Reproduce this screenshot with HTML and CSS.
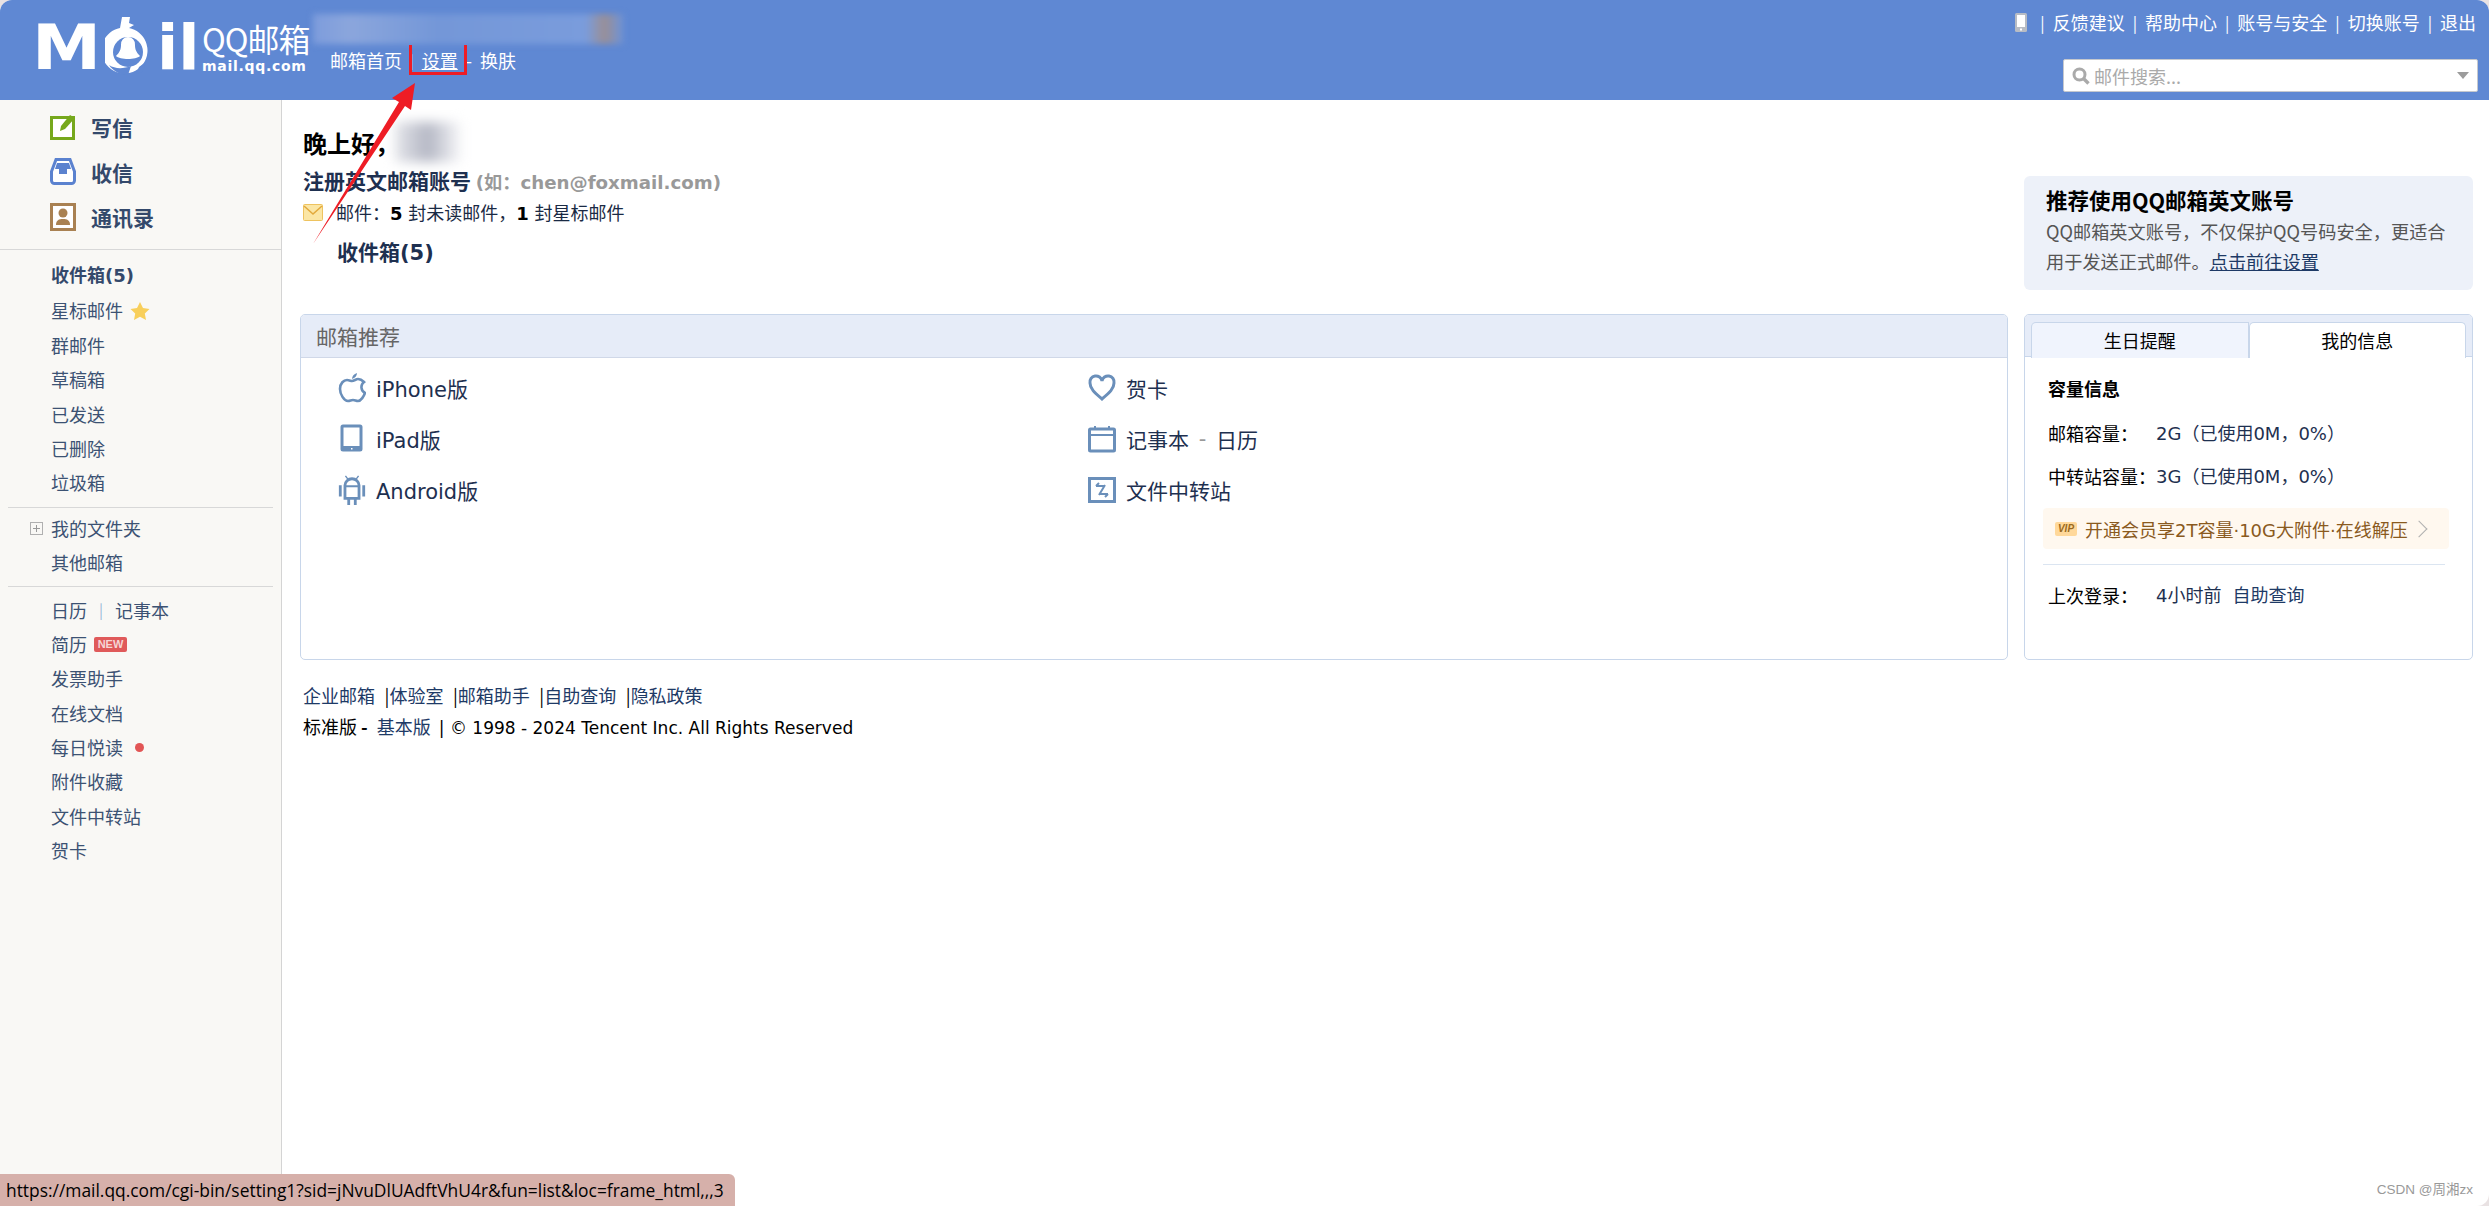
FILE: index.html
```html
<!DOCTYPE html>
<html lang="zh-CN">
<head>
	<meta charset="UTF-8">
	<title>QQ邮箱</title>
	<link rel="stylesheet" href="styles.css">
</head>
<body>
	<div class="app">
		<div class="top">
			<div class="logo">
				<span class="logo_m">M</span>
				<svg class="logo_a" viewBox="0 0 46 58">
					<path d="M17 0h8l-1 6 5 2-5 3a23 23 0 1 1-9 0z" fill="#fff"/>
					<circle cx="23" cy="35" r="15" fill="#5f88d3"/>
					<path d="M23 20a7 7 0 0 1 7 8c0 4 1 7 5 11-4 4-20 4-24 0 4-4 5-7 5-11a7 7 0 0 1 7-8z" fill="#fff"/>
					<path d="M4 48c6 4 14 4 22 1l-3 9c-8 0-15-4-19-10zM34 50l8-6-5 11-6 2z" fill="#5f88d3"/>
				</svg>
				<span class="logo_il">il</span>
				<div class="logo_txt">
					<div class="logo_cn">QQ邮箱</div>
					<div class="logo_en">mail.qq.com</div>
				</div>
			</div>
			<div class="top_mid">
				<div class="account"></div>
				<div class="nav"><a>邮箱首页</a><span class="nav_sep">|</span><a class="nav_on">设置</a><span class="nav_dash">-</span><a>换肤</a></div>
			</div>
			<div class="top_right">
				<div class="links">
					<svg class="phone" viewBox="0 0 12 19"><rect width="12" height="19" rx="1.5" fill="#b8bcc4"/><rect x="2" y="2" width="8" height="12" fill="#fff"/><rect x="5" y="15.5" width="2" height="2" fill="#fff"/></svg>
					<i>|</i><a>反馈建议</a><i>|</i><a>帮助中心</a><i>|</i><a>账号与安全</a><i>|</i><a>切换账号</a><i>|</i><a>退出</a>
				</div>
				<div class="search">
					<svg class="search_ic" viewBox="0 0 18 18"><circle cx="7.5" cy="7.5" r="5.5" fill="none" stroke="#aaa" stroke-width="3"/><path d="M11.5 11.5l5 5" stroke="#aaa" stroke-width="3.4"/></svg>
					<span class="search_txt">邮件搜索...</span>
					<span class="search_arrow"></span>
				</div>
			</div>
		</div>

		<div class="body">
			<div class="side">
				<div class="side_main">
					<div class="side_big">
						<svg class="side_ic" viewBox="0 0 26 26"><rect x="1.5" y="3.5" width="22" height="21" fill="#fff" stroke="#76a81c" stroke-width="3"/><path d="M10 17l1-5 9-11 5 3-10 11z" fill="#76a81c"/></svg>
						<span>写信</span>
					</div>
					<div class="side_big">
						<svg class="side_ic" viewBox="0 0 26 28"><path d="M6 1.5h14l4.500 12v9a3 3 0 0 1-3 3h-17a3 3 0 0 1-3-3v-9z" fill="#fff" stroke="#5b82cf" stroke-width="3"/><path d="M7 5h12l2 6h-4v5h-8v-5h-4z" fill="#5b82cf"/></svg>
						<span>收信</span>
					</div>
					<div class="side_big">
						<svg class="side_ic" viewBox="0 0 26 28"><rect x="1.500" y="1.500" width="23" height="25" fill="#fff" stroke="#a98152" stroke-width="3"/><circle cx="13" cy="10" r="4.500" fill="#a98152"/><path d="M6 22c0-5 3-6 7-6s7 1 7 6z" fill="#a98152"/></svg>
						<span>通讯录</span>
					</div>
				</div>
				<div class="side_line side_full"></div>
				<div class="side_list first">
					<a class="side_item side_bold">收件箱(5)</a>
					<a class="side_item">星标邮件 <svg class="star" viewBox="0 0 20 20"><path d="M10 1l3 6 6.500 1-4.700 4.500 1.200 6.500-6-3.200-6 3.200 1.200-6.500L.5 8 7 7z" fill="#f8cf5b"/></svg></a>
					<a class="side_item">群邮件</a>
					<a class="side_item">草稿箱</a>
					<a class="side_item">已发送</a>
					<a class="side_item">已删除</a>
					<a class="side_item">垃圾箱</a>
				</div>
				<div class="side_line"></div>
				<div class="side_list second">
					<a class="side_item"><span class="plus"></span>我的文件夹</a>
					<a class="side_item">其他邮箱</a>
				</div>
				<div class="side_line"></div>
				<div class="side_list third">
					<a class="side_item">日历<span class="side_sep">|</span>记事本</a>
					<a class="side_item">简历<span class="new">NEW</span></a>
					<a class="side_item">发票助手</a>
					<a class="side_item">在线文档</a>
					<a class="side_item">每日悦读<span class="dot"></span></a>
					<a class="side_item">附件收藏</a>
					<a class="side_item">文件中转站</a>
					<a class="side_item">贺卡</a>
				</div>
			</div>

			<div class="main">
				<div class="row_top">
					<div class="hello">
						<div class="hello_t">晚上好，<span class="hello_name"></span></div>
						<div class="reg">注册英文邮箱账号 <span class="reg_tip">(如：chen@foxmail.com)</span></div>
						<div class="mails">
							<svg class="env" viewBox="0 0 20 17"><rect x=".5" y=".5" width="19" height="16" rx="1" fill="#fbe6a5" stroke="#eec35f"/><path d="M1 2l9 8 9-8" fill="none" stroke="#e2a93c" stroke-width="1.500"/></svg>
							<span class="mails_txt">邮件：<b>5</b> 封未读邮件，<b>1</b> 封星标邮件</span>
						</div>
						<div class="inbox">收件箱(5)</div>
					</div>
					<div class="promo">
						<div class="promo_t">推荐使用QQ邮箱英文账号</div>
						<div class="promo_d">QQ邮箱英文账号，不仅保护QQ号码安全，更适合<br>用于发送正式邮件。<a>点击前往设置</a></div>
					</div>
				</div>

				<div class="row_panel">
					<div class="panel">
						<div class="panel_h">邮箱推荐</div>
						<div class="rec">
							<a class="rec_item"><svg class="rec_ic" viewBox="0 0 26 30"><path d="M13 8c2 0 4-2 6-2 3 0 5 2 6 3-4 3-3 9 1 11-1 3-4 8-7 8-2 0-3-1-5-1s-3 1-5 1c-4 0-8-7-8-12 0-6 4-9 7-9 2 0 4 1 5 1z" fill="none" stroke="#6a8fba" stroke-width="2.600"/><path d="M13 6c0-3 2-5 5-6 0 3-2 5-5 6z" fill="#6a8fba"/></svg>iPhone版</a>
							<a class="rec_item"><svg class="rec_ic" viewBox="0 0 26 30"><rect x="3" y="2" width="19" height="24" rx="1" fill="none" stroke="#6a8fba" stroke-width="3"/><rect x="2" y="22" width="21" height="5" fill="#6a8fba"/><rect x="12" y="24" width="1.500" height="1.500" fill="#fff"/></svg>iPad版</a>
							<a class="rec_item"><svg class="rec_ic" viewBox="1 0 28 32"><path d="M8 1l3 4M22 1l-3 4" stroke="#6a8fba" stroke-width="1.500"/><path d="M7.500 25V11a7.500 7 0 0 1 15 0v14z" fill="none" stroke="#6a8fba" stroke-width="3"/><path d="M7 12h16" stroke="#6a8fba" stroke-width="2"/><path d="M1 11h3v12H1zM26 11h3v12h-3zM10 25h3v7h-3zM17 25h3v7h-3z" fill="#6a8fba"/></svg>Android版</a>
							<a class="rec_item"><svg class="rec_ic" viewBox="0 0 28 26"><path d="M14 24C7 18 2 14 2 8a6 6 0 0 1 12-2 6 6 0 0 1 12 2c0 6-5 10-12 16z" fill="none" stroke="#6a8fba" stroke-width="3"/></svg>贺卡</a>
							<a class="rec_item"><svg class="rec_ic" viewBox="0 0 28 28"><rect x="1.500" y="4" width="25" height="22" rx="1" fill="none" stroke="#6a8fba" stroke-width="3"/><path d="M1 10h26" stroke="#6a8fba" stroke-width="2"/><path d="M6 1h2v4H6zM20 1h2v4h-2z" fill="#6a8fba"/></svg>记事本 <span class="rec_dash">-</span> 日历</a>
							<a class="rec_item"><svg class="rec_ic" viewBox="0 0 28 26"><rect x="1.500" y="1.500" width="25" height="23" fill="none" stroke="#6a8fba" stroke-width="3"/><path d="M8 9h8M8 9l3-3M20 17h-8M20 17l-3 3M17 8l-6 10" fill="none" stroke="#6a8fba" stroke-width="2"/></svg>文件中转站</a>
						</div>
					</div>

					<div class="info">
						<div class="tabs">
							<div class="tab">生日提醒</div>
							<div class="tab tab_on">我的信息</div>
						</div>
						<div class="info_body">
							<div class="info_t">容量信息</div>
							<div class="info_row"><span class="info_k">邮箱容量：</span>2G（已使用0M，0%）</div>
							<div class="info_row"><span class="info_k">中转站容量：</span>3G（已使用0M，0%）</div>
							<div class="vip">
								<span class="vip_ic">VIP</span>
								<span class="vip_txt">开通会员享2T容量·10G大附件·在线解压</span>
								<span class="vip_arrow"></span>
							</div>
							<div class="info_line"></div>
							<div class="info_row"><span class="info_k">上次登录：</span>4小时前<a class="info_q">自助查询</a></div>
						</div>
					</div>
				</div>

				<div class="foot">
					<div class="foot_l"><a>企业邮箱</a> |<a>体验室</a> |<a>邮箱助手</a> |<a>自助查询</a> |<a>隐私政策</a></div>
					<div class="foot_l foot_b">标准版 <b>-</b> <a>基本版</a> <span class="foot_c">| © 1998 - 2024 Tencent Inc. All Rights Reserved</span></div>
				</div>
			</div>
		</div>
	</div>

	<!-- 截图上的标注 -->
	<div class="mark_box"></div>
	<svg class="mark_arrow" viewBox="0 0 110 170"><path d="M3 164L89 22 82 18 105 3 101 30 95 26z" fill="#ee1c25"/></svg>

	<div class="status">https://mail.qq.com/cgi-bin/setting1?sid=jNvuDlUAdftVhU4r&amp;fun=list&amp;loc=frame_html,,,3</div>
	<div class="wm">CSDN @周湘zx</div>
</body>
</html>
```
FILE: styles.css
```css
html, body {
	height: 100%;
}
body {
	margin: 0px;
	background-color: #e9e2e3;
	color: #000000;
	font-family: "Noto Sans CJK SC", sans-serif;
	font-size: 18px;
	overflow: hidden;
}
a {
	color: #1e3a66;
}
.app {
	height: 1206px;
	display: flex;
	flex-direction: column;
	background-color: #ffffff;
	border-radius: 12px;
	overflow: hidden;
}

/* top bar */
.top {
	height: 100px;
	flex: none;
	display: flex;
	background-color: #5f88d3;
	color: #ffffff;
}
.top a {
	color: #ffffff;
}
.logo {
	width: 281px;
	padding-left: 32px;
	display: flex;
	align-items: flex-start;
	flex: none;
}
.logo_m, .logo_il {
	font-family: "DejaVu Sans", sans-serif;
	font-weight: bold;
	font-size: 62px;
	line-height: 62px;
	margin-top: 17px;
}
.logo_m {
	width: 73px;
	transform: scaleX(1.12);
	transform-origin: left;
}
.logo_a {
	width: 46px;
	height: 58px;
	margin-top: 17px;
}
.logo_il {
	width: 42px;
	margin-left: 6px;
}
.logo_txt {
	width: 108px;
	margin: 20px 0px 0px 3px;
	flex: none;
}
.logo_cn {
	font-size: 32px;
	line-height: 37px;
	letter-spacing: -1px;
	white-space: nowrap;
}
.logo_en {
	font-family: "DejaVu Sans", sans-serif;
	font-weight: bold;
	font-size: 14px;
	line-height: 18px;
	letter-spacing: 0.7px;
	white-space: nowrap;
}
.top_mid {
	flex: 1;
}
.account {
	width: 310px;
	height: 30px;
	margin-top: 14px;
	background: linear-gradient(90deg, #7d9cdc 0%, #8ba6dc 12%, #7497d8 40%, #7a9cdc 88%, #9a8f96 94%, #6f93d6 100%);
	filter: blur(3px);
}
.nav {
	margin: 1px 0px 0px 17px;
	height: 30px;
	line-height: 30px;
	display: flex;
}
.nav_on {
	text-decoration: underline;
}
.nav_sep {
	margin: 0px 8px;
	opacity: 0.6;
	font-size: 14px;
}
.nav_dash {
	margin: 0px 8px;
}
.top_right {
	width: 500px;
	flex: none;
	display: flex;
	flex-direction: column;
	align-items: flex-end;
}
.links {
	height: 44px;
	padding-right: 13px;
	display: flex;
	align-items: center;
	line-height: 44px;
}
.links i {
	font-style: normal;
	margin: 0px 8px;
	font-size: 16px;
}
.phone {
	width: 12px;
	height: 19px;
	margin-right: 5px;
}
.search {
	width: 405px;
	height: 31px;
	margin: 15px 11px 0px 0px;
	background-color: #ffffff;
	border: 1px solid #c5c8ce;
	border-radius: 2px;
	display: flex;
	align-items: center;
	padding-left: 8px;
}
.search_ic {
	width: 18px;
	height: 18px;
	margin-right: 4px;
}
.search_txt {
	flex: 1;
	color: #aaaaaa;
}
.search_arrow {
	width: 0px;
	height: 0px;
	margin-right: 8px;
	border-top: 7px solid #9c9c9c;
	border-left: 6px solid transparent;
	border-right: 6px solid transparent;
}

/* left menu */
.body {
	flex: 1;
	display: flex;
}
.side {
	width: 281px;
	flex: none;
	background-color: #f9f8f5;
	border-right: 1px solid #d4d4d4;
	color: #3c5273;
}
.side_main {
	padding-top: 4px;
	height: 149px;
	box-sizing: border-box;
}
.side_big {
	height: 45px;
	padding-left: 50px;
	display: flex;
	align-items: center;
	font-size: 21px;
	font-weight: bold;
	color: #34496b;
}
.side_ic {
	width: 26px;
	height: 28px;
	margin-right: 15px;
}
.side_line {
	height: 1px;
	background-color: #d8d8d8;
	margin: 0px 8px;
}
.side_line.side_full {
	margin: 0px;
}
.side_list.first {
	padding: 9px 0px 7px 0px;
}
.side_list.second {
	padding: 3px 0px 6px 0px;
}
.side_list.third {
	padding: 6px 0px 0px 0px;
}
.side_item {
	height: 34.4px;
	line-height: 34.4px;
	padding-left: 51px;
	display: flex;
	align-items: center;
	position: relative;
	color: #3c5273;
}
.side_bold {
	font-family: "DejaVu Sans", "Noto Sans CJK SC", sans-serif;
	font-weight: bold;
	color: #34496b;
}
.star {
	width: 20px;
	height: 20px;
	margin-left: 7px;
}
.plus {
	position: absolute;
	left: 30px;
	top: 11px;
	width: 11px;
	height: 11px;
	border: 1px solid #b0b0b0;
	background: linear-gradient(#999, #999) center/7px 1px no-repeat, linear-gradient(#999, #999) center/1px 7px no-repeat;
}
.side_sep {
	margin: 0px 12px;
	color: #9cb8d8;
	font-size: 15px;
}
.new {
	margin-left: 7px;
	width: 33px;
	height: 15px;
	line-height: 15px;
	border-radius: 2px;
	background-color: #e05a5a;
	color: #f6d6d6;
	font-family: "Liberation Sans", sans-serif;
	font-size: 11px;
	font-weight: bold;
	text-align: center;
}
.dot {
	width: 9px;
	height: 9px;
	margin-left: 12px;
	border-radius: 50%;
	background-color: #e25555;
}

/* main */
.main {
	flex: 1;
	padding: 0px 16px 0px 18px;
	min-width: 0;
}
.row_top, .row_panel {
	display: grid;
	grid-template-columns: 1fr 449px;
	column-gap: 16px;
}
.row_top {
	height: 214px;
}
.hello {
	padding: 25px 0px 0px 3px;
}
.hello_t {
	height: 36px;
	line-height: 36px;
	font-size: 24px;
	font-weight: bold;
	display: flex;
}
.hello_name {
	width: 66px;
	height: 40px;
	margin: -3px 0px 0px -4px;
	background: linear-gradient(90deg, #e4e5ea, #b4b7c4 50%, #f8f8fa);
	filter: blur(6px);
}
.reg {
	height: 32px;
	line-height: 32px;
	margin-top: 3px;
	font-size: 21px;
	font-weight: bold;
	color: #1e3050;
}
.reg_tip {
	font-family: "DejaVu Sans", "Noto Sans CJK SC", sans-serif;
	font-size: 18.2px;
	color: #999999;
}
.mails {
	height: 32px;
	display: flex;
	align-items: center;
	color: #1a2a44;
}
.env {
	width: 20px;
	height: 17px;
	margin-right: 13px;
}
.mails_txt {
	font-family: "DejaVu Sans", "Noto Sans CJK SC", sans-serif;
}
.mails b {
	color: #000000;
}
.inbox {
	height: 32px;
	line-height: 32px;
	margin-top: 9px;
	padding-left: 34px;
	font-family: "DejaVu Sans", "Noto Sans CJK SC", sans-serif;
	font-size: 21px;
	font-weight: bold;
	color: #1e3050;
}
.promo {
	margin-top: 76px;
	height: 114px;
	padding: 8px 0px 0px 22px;
	box-sizing: border-box;
	background-color: #edf1f9;
	border-radius: 6px;
}
.promo_t {
	height: 32px;
	line-height: 32px;
	font-size: 21.5px;
	font-weight: bold;
}
.promo_d {
	line-height: 30px;
	font-size: 18.2px;
	color: #555555;
	white-space: nowrap;
}
.promo_d a {
	text-decoration: underline;
	color: #1e3a66;
}

/* panels */
.row_panel {
	height: 346px;
}
.panel, .info {
	border: 1px solid #c8d6ea;
	border-radius: 5px;
	overflow: hidden;
}
.panel_h {
	height: 42px;
	line-height: 42px;
	padding-left: 15px;
	background-color: #e6ecf8;
	border-bottom: 1px solid #d0d8e8;
	font-size: 21px;
	color: #666666;
}
.rec {
	display: grid;
	grid-template-columns: 750px 1fr;
	grid-template-rows: repeat(3, 51px);
	grid-auto-flow: column;
	padding: 4px 0px 0px 0px;
}
.rec_item {
	display: flex;
	align-items: center;
	padding-left: 37px;
	font-size: 21px;
	font-family: "DejaVu Sans", "Noto Sans CJK SC", sans-serif;
	color: #1e3050;
	white-space: pre;
}
.rec_ic {
	width: 28px;
	height: 30px;
	margin-right: 10px;
}
.rec_dash {
	color: #999999;
	margin: 0px 3px;
}
.tabs {
	height: 42px;
	display: flex;
	padding: 7px 6px 0px 6px;
	box-sizing: border-box;
	background-color: #e6ecf8;
	border-bottom: 1px solid #c8d6ea;
}
.tab {
	flex: 1;
	height: 35px;
	line-height: 34px;
	text-align: center;
	font-size: 18px;
	background-color: #f0f4fd;
	border: 1px solid #c8d6ea;
	border-bottom: none;
	border-radius: 5px 0px 0px 0px;
}
.tab_on {
	background-color: #ffffff;
	border-radius: 5px 5px 0px 0px;
}
.info_body {
	padding: 15px 23px 0px 23px;
}
.info_t {
	height: 32px;
	line-height: 32px;
	font-weight: bold;
	margin-bottom: 8px;
}
.info_row {
	height: 43px;
	line-height: 43px;
	display: flex;
	color: #1e3050;
	white-space: nowrap;
	font-family: "DejaVu Sans", "Noto Sans CJK SC", sans-serif;
}
.info_k {
	width: 108px;
	color: #000000;
	flex: none;
	font-family: "Noto Sans CJK SC", sans-serif;
}
.info_q {
	margin-left: 11px;
}
.vip {
	height: 41px;
	margin: 10px 0px 0px -5px;
	padding-left: 12px;
	display: flex;
	align-items: center;
	background-color: #fff8ef;
	border-radius: 4px;
	color: #8a5a1e;
}
.vip_ic {
	width: 22px;
	height: 14px;
	line-height: 14px;
	margin-right: 8px;
	border-radius: 2px;
	background-color: #ffd89a;
	color: #9a6a20;
	font-family: "Liberation Sans", sans-serif;
	font-size: 10px;
	font-weight: bold;
	font-style: italic;
	text-align: center;
}
.vip_txt {
	flex: 1;
	white-space: nowrap;
	font-family: "DejaVu Sans", "Noto Sans CJK SC", sans-serif;
}
.vip_arrow {
	width: 11px;
	height: 11px;
	margin-right: 24px;
	border-top: 1.500px solid #b0b0b0;
	border-right: 1.500px solid #b0b0b0;
	transform: rotate(45deg);
}
.info_line {
	height: 1px;
	margin: 15px 4px 9px -5px;
	background-color: #dbe5f1;
}

/* footer */
.foot {
	padding: 19px 0px 0px 3px;
}
.foot_l {
	height: 32px;
	line-height: 32px;
	white-space: pre;
}
.foot_l a {
	margin-right: 5.5px;
}
.foot_b {
	margin-top: -1px;
}
.foot_b a {
	margin: 0px 4px 0px 5px;
}
.foot_c {
	font-family: "DejaVu Sans", "Noto Sans CJK SC", sans-serif;
	font-size: 17px;
}

/* overlays */
.mark_box {
	position: absolute;
	left: 409px;
	top: 45px;
	width: 52px;
	height: 27px;
	border: 3px solid #ee1c25;
	border-top: none;
}
.mark_arrow {
	position: absolute;
	left: 310px;
	top: 80px;
	width: 110px;
	height: 170px;
}
.status {
	position: absolute;
	left: 0px;
	bottom: 0px;
	width: 735px;
	height: 32px;
	line-height: 32px;
	padding-left: 6px;
	box-sizing: border-box;
	background-color: #d6b0aa;
	border-radius: 0px 6px 0px 0px;
	font-family: "Open Sans", sans-serif;
	font-size: 17.4px;
	white-space: nowrap;
	overflow: hidden;
}
.wm {
	position: absolute;
	right: 16px;
	bottom: 8px;
	font-family: "Liberation Sans", "Noto Sans CJK SC", sans-serif;
	font-size: 13.5px;
	color: #999999;
}
```
